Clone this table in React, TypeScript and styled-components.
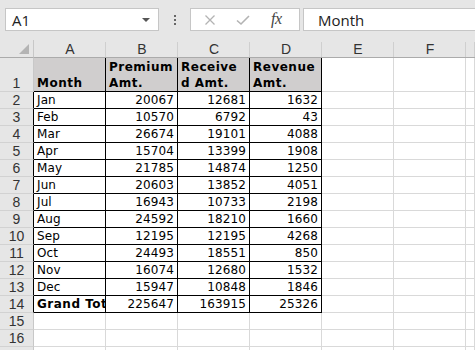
import React from 'react';
import styled, { createGlobalStyle } from 'styled-components';

const GlobalStyle = createGlobalStyle`
  html, body {
    margin: 0;
    padding: 0;
    background: #ffffff;
    overflow: hidden;
  }
  body {
    width: 475px;
    height: 350px;
  }
`;

const Sheet = styled.div`
  width: 475px;
  height: 350px;
  overflow: hidden;
  background: #ffffff;
  font-family: 'DejaVu Sans', Verdana, sans-serif;
`;

const Toolbar = styled.div`
  height: 40px;
  box-sizing: border-box;
  background: #e6e6e6;
  display: flex;
  align-items: flex-start;
  padding-top: 8px;
  padding-left: 5px;
  font-family: 'Open Sans', 'Noto Sans', sans-serif;
`;

const NameBox = styled.div`
  width: 154px;
  height: 23px;
  box-sizing: border-box;
  background: #ffffff;
  border: 1px solid #c6c6c6;
  display: flex;
  align-items: center;
  justify-content: space-between;
  padding: 0 8px 0 6px;
  font-size: 15px;
  color: #222;
`;

const Caret = styled.span`
  width: 0;
  height: 0;
  border-left: 4px solid transparent;
  border-right: 4px solid transparent;
  border-top: 4px solid #555;
`;

const Dots = styled.div`
  width: 31px;
  height: 23px;
  display: flex;
  flex-direction: column;
  align-items: center;
  justify-content: center;
  gap: 2px;

  span {
    width: 2px;
    height: 2px;
    background: #666;
  }
`;

const ButtonBox = styled.div`
  width: 110px;
  height: 23px;
  box-sizing: border-box;
  background: #ffffff;
  border: 1px solid #c6c6c6;
  display: flex;
  align-items: center;
  padding-left: 13px;
  gap: 20px;
`;

const Fx = styled.span`
  font-family: 'Liberation Serif', 'DejaVu Serif', serif;
  font-style: italic;
  font-size: 16px;
  color: #444;
  letter-spacing: -0.5px;
  margin-left: 1px;
  margin-top: -2px;
`;

const FormulaBox = styled.div`
  margin-left: 3px;
  flex: 1;
  height: 23px;
  box-sizing: border-box;
  background: #ffffff;
  border: 1px solid #c6c6c6;
  border-right: none;
  display: flex;
  align-items: center;
  padding-left: 14px;
  font-size: 15px;
  color: #222;
`;

const Grid = styled.div`
  display: grid;
  grid-template-columns: 34px repeat(6, 72px) 1fr;
  grid-template-rows: 18px 34px repeat(16, 17px);
`;

const Corner = styled.div`
  background: #e6e6e6;
  border-right: 1px solid #c8c8c8;
  border-bottom: 1px solid #ababab;
  box-sizing: border-box;
  position: relative;

  &::after {
    content: '';
    position: absolute;
    right: 4px;
    bottom: 3px;
    width: 0;
    height: 0;
    border-left: 10px solid transparent;
    border-bottom: 10px solid #b4b4b4;
  }
`;

const ColHead = styled.div`
  background: #e6e6e6;
  box-sizing: border-box;
  border-bottom: 1px solid #ababab;
  position: relative;
  display: flex;
  align-items: center;
  justify-content: center;
  font-family: 'Liberation Sans', Arial, sans-serif;
  font-size: 14px;
  color: #333;

  &::after {
    content: '';
    position: absolute;
    right: 0;
    top: 2px;
    bottom: 0;
    width: 1px;
    background: #cfcfcf;
  }
`;

const RowHead = styled.div<{ $edge?: boolean }>`
  background: #e6e6e6;
  box-sizing: border-box;
  border-right: 1px solid ${(p) => (p.$edge ? '#000' : '#c8c8c8')};
  border-bottom: 1px solid #d2d2d2;
  display: flex;
  align-items: flex-end;
  justify-content: center;
  font-family: 'Liberation Sans', Arial, sans-serif;
  font-size: 14px;
  line-height: 16px;
  color: #333;
`;

const Cell = styled.div<{ $num?: boolean; $bold?: boolean; $fill?: boolean; $boxed?: boolean }>`
  box-sizing: border-box;
  border-right: 1px solid ${(p) => (p.$boxed ? '#000' : '#d9d9d9')};
  border-bottom: 1px solid ${(p) => (p.$boxed ? '#000' : '#d9d9d9')};
  background: ${(p) => (p.$fill ? '#d0cece' : '#ffffff')};
  display: flex;
  align-items: flex-end;
  justify-content: ${(p) => (p.$num ? 'flex-end' : 'flex-start')};
  padding: 0 3px 0 3px;
  font-size: 12px;
  line-height: 16px;
  font-weight: ${(p) => (p.$bold ? 700 : 400)};
  letter-spacing: ${(p) => (p.$bold ? '0.5px' : '0.1px')};
  color: #000;
  white-space: nowrap;
  overflow: hidden;
`;

const HeadText = styled.span`
  white-space: pre;
`;

const rows: [string, number, number, number][] = [
  ['Jan', 20067, 12681, 1632],
  ['Feb', 10570, 6792, 43],
  ['Mar', 26674, 19101, 4088],
  ['Apr', 15704, 13399, 1908],
  ['May', 21785, 14874, 1250],
  ['Jun', 20603, 13852, 4051],
  ['Jul', 16943, 10733, 2198],
  ['Aug', 24592, 18210, 1660],
  ['Sep', 12195, 12195, 4268],
  ['Oct', 24493, 18551, 850],
  ['Nov', 16074, 12680, 1532],
  ['Dec', 15947, 10848, 1846],
];

const totals = [225647, 163915, 25326];

const cols = ['A', 'B', 'C', 'D', 'E', 'F', ''];

const X = () => (
  <svg width="12" height="12" viewBox="0 0 12 12">
    <path d="M1.5 1.5 L10.5 10.5 M10.5 1.5 L1.5 10.5" stroke="#b3b3b3" strokeWidth="1.3" fill="none" />
  </svg>
);

const Check = () => (
  <svg width="14" height="12" viewBox="0 0 14 12">
    <path d="M1 6.5 L5 10 L13 2" stroke="#b3b3b3" strokeWidth="1.6" fill="none" />
  </svg>
);

const Empty = ({ n }: { n: number }) => (
  <>
    {Array.from({ length: n }).map((_, i) => (
      <Cell key={i} />
    ))}
  </>
);

export default function App() {
  return (
    <Sheet>
      <GlobalStyle />
      <Toolbar>
        <NameBox>
          A1
          <Caret />
        </NameBox>
        <Dots>
          <span />
          <span />
          <span />
        </Dots>
        <ButtonBox>
          <X />
          <Check />
          <Fx>fx</Fx>
        </ButtonBox>
        <FormulaBox>Month</FormulaBox>
      </Toolbar>

      <Grid>
        <Corner />
        {cols.map((c, i) => (
          <ColHead key={i}>{c}</ColHead>
        ))}

        <RowHead>1</RowHead>
        <Cell $bold $fill $boxed>Month</Cell>
        <Cell $bold $fill $boxed>
          <HeadText>{'Premium\nAmt.'}</HeadText>
        </Cell>
        <Cell $bold $fill $boxed>
          <HeadText>{'Receive\nd Amt.'}</HeadText>
        </Cell>
        <Cell $bold $fill $boxed>
          <HeadText>{'Revenue\nAmt.'}</HeadText>
        </Cell>
        <Empty n={3} />

        {rows.map((r, i) => (
          <React.Fragment key={r[0]}>
            <RowHead $edge>{i + 2}</RowHead>
            <Cell $boxed>{r[0]}</Cell>
            <Cell $boxed $num>{r[1]}</Cell>
            <Cell $boxed $num>{r[2]}</Cell>
            <Cell $boxed $num>{r[3]}</Cell>
            <Empty n={3} />
          </React.Fragment>
        ))}

        <RowHead $edge>14</RowHead>
        <Cell $boxed $bold>Grand Tot</Cell>
        {totals.map((t) => (
          <Cell key={t} $boxed $num>{t}</Cell>
        ))}
        <Empty n={3} />

        {[15, 16].map((n) => (
          <React.Fragment key={n}>
            <RowHead>{n}</RowHead>
            <Empty n={7} />
          </React.Fragment>
        ))}
        <RowHead />
        <Empty n={7} />
      </Grid>
    </Sheet>
  );
}
